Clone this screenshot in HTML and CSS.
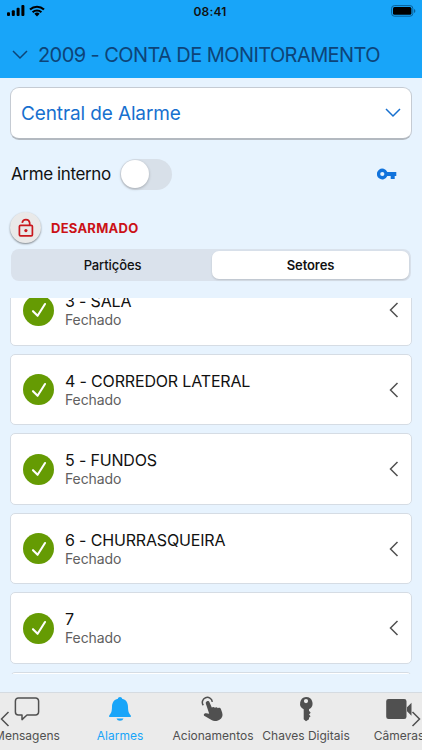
FILE: index.html
```html
<!DOCTYPE html>
<html lang="pt-BR">
<head>
    <meta charset="UTF-8">
    <meta name="viewport" content="width=device-width, initial-scale=1.0">
    <title>Central de Alarme</title>
    <link rel="stylesheet" href="styles.css">
</head>
<body>
    <div class="app">
        <header class="header">
            <div class="status-bar">
                <div class="signal">
                    <svg width="18" height="12" viewBox="0 0 18 12"><rect x="0" y="7.3" width="3" height="3.7" rx="1"/><rect x="4.8" y="5.3" width="3" height="5.7" rx="1"/><rect x="9.6" y="2.8" width="3" height="8.2" rx="1"/><rect x="14.4" y="0" width="3" height="11" rx="1"/></svg>
                    <svg width="16" height="12" viewBox="0 0 16 12"><g fill="none" stroke="#000" stroke-width="2.1"><path d="M1 4.6a10.1 10.1 0 0 1 14 0"/><path d="M3.6 7.3a6.4 6.4 0 0 1 8.8 0"/></g><path d="M8 11.4 5.4 8.8a3.8 3.8 0 0 1 5.2 0z"/></svg>
                </div>
                <span class="time">08:41</span>
                <svg class="battery" width="25" height="12" viewBox="0 0 25 12"><rect x=".6" y=".6" width="21.2" height="10.6" rx="2.8" fill="none" stroke="#08609a" stroke-width="1"/><rect x="2" y="2" width="18.4" height="7.8" rx="1.5"/><path d="M23 4v4q1.4-.6 1.4-2T23 4z" fill="#08609a"/></svg>
            </div>
            <div class="account">
                <svg width="16" height="10" viewBox="0 0 16 10" fill="none" stroke="#0d4478" stroke-width="1.5"><path d="M1 1l7 7 7-7"/></svg>
                <h1 class="account-name">2009 - CONTA DE MONITORAMENTO</h1>
            </div>
        </header>

        <main class="content">
            <div class="select">
                <span class="select-text">Central de Alarme</span>
                <svg width="16" height="10" viewBox="0 0 16 10" fill="none" stroke="#1770cf" stroke-width="1.5"><path d="M1 1l7 7 7-7"/></svg>
            </div>

            <div class="arm-row">
                <span class="arm-label">Arme interno</span>
                <span class="toggle"><span class="toggle-knob"></span></span>
                <svg class="key" width="20" height="12" viewBox="0 0 20 12" fill="#1273dc" fill-rule="evenodd"><path d="M10.3 4A5.4 5.4 0 1 0 10.3 8H13.7V11H17.7V8H19.3V4zM5.3 8.1a2.1 2.1 0 1 1 0-4.2 2.1 2.1 0 0 1 0 4.2z"/></svg>
            </div>

            <div class="state-row">
                <span class="lock">
                    <svg width="16" height="20" viewBox="0 0 16 20" fill="none" stroke="#c9181e" stroke-width="1.7"><rect x="1.4" y="7.4" width="13" height="10.5" rx="1.2"/><path d="M4.2 4.8a3.8 3.8 0 0 1 7.5 0v2.6"/><circle cx="7.9" cy="12.6" r="1.6" fill="#c9181e" stroke="none"/></svg>
                </span>
                <span class="state-text">DESARMADO</span>
            </div>

            <div class="segment">
                <span class="segment-item">Partições</span>
                <span class="segment-item active">Setores</span>
            </div>

            <div class="list">
                <div class="card">
                    <span class="check"><svg width="16" height="16" viewBox="0 0 16 16"><path d="M2 9.2l4.600 4.600L14 2"/></svg></span>
                    <div class="card-text"><div class="card-title">3 - SALA</div><div class="card-sub">Fechado</div></div>
                    <svg class="arrow" width="10" height="16" viewBox="0 0 10 16"><path d="M8.5 1L1.5 8l7 7"/></svg>
                </div>
                <div class="card">
                    <span class="check"><svg width="16" height="16" viewBox="0 0 16 16"><path d="M2 9.2l4.600 4.600L14 2"/></svg></span>
                    <div class="card-text"><div class="card-title">4 - CORREDOR LATERAL</div><div class="card-sub">Fechado</div></div>
                    <svg class="arrow" width="10" height="16" viewBox="0 0 10 16"><path d="M8.5 1L1.5 8l7 7"/></svg>
                </div>
                <div class="card">
                    <span class="check"><svg width="16" height="16" viewBox="0 0 16 16"><path d="M2 9.2l4.600 4.600L14 2"/></svg></span>
                    <div class="card-text"><div class="card-title">5 - FUNDOS</div><div class="card-sub">Fechado</div></div>
                    <svg class="arrow" width="10" height="16" viewBox="0 0 10 16"><path d="M8.5 1L1.5 8l7 7"/></svg>
                </div>
                <div class="card">
                    <span class="check"><svg width="16" height="16" viewBox="0 0 16 16"><path d="M2 9.2l4.600 4.600L14 2"/></svg></span>
                    <div class="card-text"><div class="card-title">6 - CHURRASQUEIRA</div><div class="card-sub">Fechado</div></div>
                    <svg class="arrow" width="10" height="16" viewBox="0 0 10 16"><path d="M8.5 1L1.5 8l7 7"/></svg>
                </div>
                <div class="card">
                    <span class="check"><svg width="16" height="16" viewBox="0 0 16 16"><path d="M2 9.2l4.600 4.600L14 2"/></svg></span>
                    <div class="card-text"><div class="card-title">7</div><div class="card-sub">Fechado</div></div>
                    <svg class="arrow" width="10" height="16" viewBox="0 0 10 16"><path d="M8.5 1L1.5 8l7 7"/></svg>
                </div>
                <div class="card"></div>
            </div>
        </main>

        <nav class="tabs">
            <div class="tab">
                <svg width="26" height="26" viewBox="0 0 26 26" fill="none" stroke="#505050" stroke-width="1.5" stroke-linejoin="round"><path d="M4.400 2h17.200a3 3 0 0 1 3 3v11a3 3 0 0 1-3 3H13l-5 4.600V19H4.400a3 3 0 0 1-3-3V5a3 3 0 0 1 3-3z"/></svg>
                <span>Mensagens</span>
            </div>
            <div class="tab active">
                <svg width="26" height="26" viewBox="0 0 26 26" fill="#18a5f9"><path d="M13 1c1.200 0 2 .8 2.100 1.800 4 .9 5.800 4 5.900 8 .1 5 1 6.600 2.600 8.400.8.900.3 1.800-.800 1.800H3.200c-1.100 0-1.600-.900-.800-1.800C4 17.400 4.900 15.800 5 10.800c.1-4 1.900-7.100 5.900-8C11 1.800 11.800 1 13 1zM9.500 22.400h7a3.600 3.200 0 0 1-7 0z"/></svg>
                <span>Alarmes</span>
            </div>
            <div class="tab">
                <svg width="26" height="26" viewBox="0 0 26 26" fill="#505050"><path d="M7 5.200c1.100-.4 2.200.1 2.600 1.200l2.200 5.200c.9-1 2.400-.9 3.100.2.900-.9 2.300-.7 3 .4 1.200-.8 2.500-.3 3 .9l1.300 3.600c1 2.900-.2 5.700-2.700 7l-1.500.7c-2.300 1-4.500.9-6.500-.3l-6.900-4c-1.600-1-.5-3 1.500-2.800l3.100.5L5.900 7.700C5.500 6.600 5.900 5.600 7 5.200z"/><path d="M3.300 9.300a5 5 0 1 1 9-3.500" fill="none" stroke="#505050" stroke-width="1.500"/></svg>
                <span>Acionamentos</span>
            </div>
            <div class="tab">
                <svg width="26" height="26" viewBox="0 0 26 26" fill="#505050" fill-rule="evenodd"><path d="M13 1a6.500 6.500 0 0 1 3 12.300v1.500l1.700 1.900-1.700 1.800 1.600 1.700-1.600 1.500v1.500L13 25.200l-2.300-2V13.300A6.500 6.500 0 0 1 13 1zm0 2a2.100 2.100 0 1 0 0 4.200A2.100 2.100 0 0 0 13 3z"/></svg>
                <span>Chaves Digitais</span>
            </div>
            <div class="tab">
                <svg width="26" height="26" viewBox="0 0 26 26" fill="#505050"><path d="M2.500 3h15.700a2.300 2.300 0 0 1 2.300 2.300v15.400a2.300 2.300 0 0 1-2.300 2.300H2.500A2.300 2.300 0 0 1 .2 20.700V5.300A2.300 2.300 0 0 1 2.500 3zM21 11.200l4.500-4.500v13L21 15.200z"/></svg>
                <span>Câmeras</span>
            </div>
            <svg class="scroll-arrow left" width="10" height="16" viewBox="0 0 10 16"><path d="M8.500 1L1.500 8l7 7"/></svg>
            <svg class="scroll-arrow right" width="10" height="16" viewBox="0 0 10 16"><path d="M1.500 1l7 7-7 7"/></svg>
        </nav>
    </div>
</body>
</html>
```
FILE: styles.css
```css
* {
    box-sizing: border-box;
}
body {
    margin: 0;
    font-family: Inter, "Liberation Sans", sans-serif;
    background: #e7f3fe;
    color: #111;
}
svg {
    display: block;
    flex: none;
}
.app {
    width: 422px;
    height: 750px;
    overflow: hidden;
    display: flex;
    flex-direction: column;
    white-space: nowrap;
}
.header {
    height: 78px;
    background: #18a5f9;
}
.status-bar {
    height: 22px;
    padding: 0 6px 0 7px;
    display: grid;
    grid-template-columns: 1fr auto 1fr;
    align-items: center;
}
.signal {
    display: flex;
    gap: 4px;
}
.time {
    font-size: 12px;
    font-weight: 600;
    letter-spacing: 0.2px;
    margin-right: 3px;
}
.battery {
    justify-self: end;
}
.account {
    height: 66px;
    display: flex;
    align-items: center;
    gap: 10px;
    padding-left: 12px;
}
.account-name {
    margin: 0;
    font-size: 20px;
    font-weight: 400;
    letter-spacing: -0.58px;
    color: #0d4478;
}
.content {
    flex: 1;
    padding: 9px 10px 0;
}
.select {
    height: 53px;
    display: flex;
    align-items: center;
    justify-content: space-between;
    padding: 0 10px;
    background: #fff;
    border: 1px solid #c5cbd3;
    border-bottom: 2px solid #b3b9c0;
    border-radius: 9px;
}
.select-text {
    font-size: 19px;
    letter-spacing: -0.12px;
    color: #1770cf;
}
.arm-row {
    height: 68px;
    display: flex;
    align-items: center;
    padding: 0 15px 0 1px;
}
.arm-label {
    font-size: 17px;
    letter-spacing: -0.38px;
    width: 108.5px;
}
.toggle {
    width: 52px;
    height: 31px;
    padding: 1.5px;
    border-radius: 16px;
    background: #d8e0e9;
}
.toggle-knob {
    display: block;
    width: 28px;
    height: 28px;
    border-radius: 50%;
    background: #fff;
    box-shadow: 0 1px 3px rgba(0,0,0,0.25);
}
.key {
    margin-left: auto;
}
.state-row {
    height: 39px;
    display: flex;
    align-items: center;
    gap: 10px;
}
.lock {
    width: 31px;
    height: 31px;
    display: flex;
    align-items: center;
    justify-content: center;
    border-radius: 50%;
    background: #e9e9e9;
    box-shadow: 0 1px 2px rgba(0,0,0,0.45);
}
.state-text {
    font-size: 13px;
    font-weight: 700;
    letter-spacing: 0.26px;
    color: #cb1117;
}
.segment {
    height: 32px;
    margin: 2px 1px 0;
    padding: 2px;
    display: flex;
    border-radius: 8px;
    background: #dae2ec;
}
.segment-item {
    flex: 1;
    display: flex;
    align-items: center;
    justify-content: center;
    border-radius: 7px;
    font-size: 13px;
    font-weight: 500;
    letter-spacing: -0.1px;
}
.segment-item.active {
    flex: none;
    width: 197px;
    background: #fff;
    font-weight: 600;
    box-shadow: 0 1px 2px rgba(0,0,0,0.15);
}
.list {
    height: 376px;
    margin-top: 17px;
    overflow: hidden;
    display: flex;
    flex-direction: column;
    justify-content: flex-end;
    gap: 8px;
}
.card {
    flex: none;
    height: 71.5px;
    display: flex;
    align-items: center;
    padding: 1px 12px 0;
    background: #fff;
    border: 1px solid #d5dce4;
    border-radius: 5px;
}
.card:last-child {
    margin-bottom: -69px;
}
.check {
    width: 31px;
    height: 31px;
    display: flex;
    align-items: center;
    justify-content: center;
    border-radius: 50%;
    background: #659b03;
}
.check path {
    fill: none;
    stroke: #fff;
    stroke-width: 2.1;
    stroke-linecap: round;
    stroke-linejoin: round;
}
.card-text {
    margin-left: 11px;
    padding-top: 1px;
    flex: 1;
}
.card-title {
    font-size: 16px;
    line-height: 19px;
    letter-spacing: -0.16px;
}
.card-sub {
    font-size: 14px;
    line-height: 18px;
    letter-spacing: -0.1px;
    color: #606060;
}
.arrow path,
.scroll-arrow path {
    fill: none;
    stroke: #505050;
    stroke-width: 1.5;
}
.tabs {
    position: relative;
    height: 58px;
    display: flex;
    background: #ebebeb;
    border-top: 1px solid #d5dbe1;
}
.tab {
    flex: none;
    width: 93px;
    padding-top: 3px;
    display: flex;
    flex-direction: column;
    align-items: center;
    gap: 6px;
    font-size: 12px;
    line-height: 15px;
    color: #505050;
}
.tab:first-child {
    margin-left: -19.5px;
}
.tab.active {
    color: #18a5f9;
}
.scroll-arrow {
    position: absolute;
    top: 18px;
}
.scroll-arrow.left {
    left: 0;
}
.scroll-arrow.right {
    right: 1px;
}
```
